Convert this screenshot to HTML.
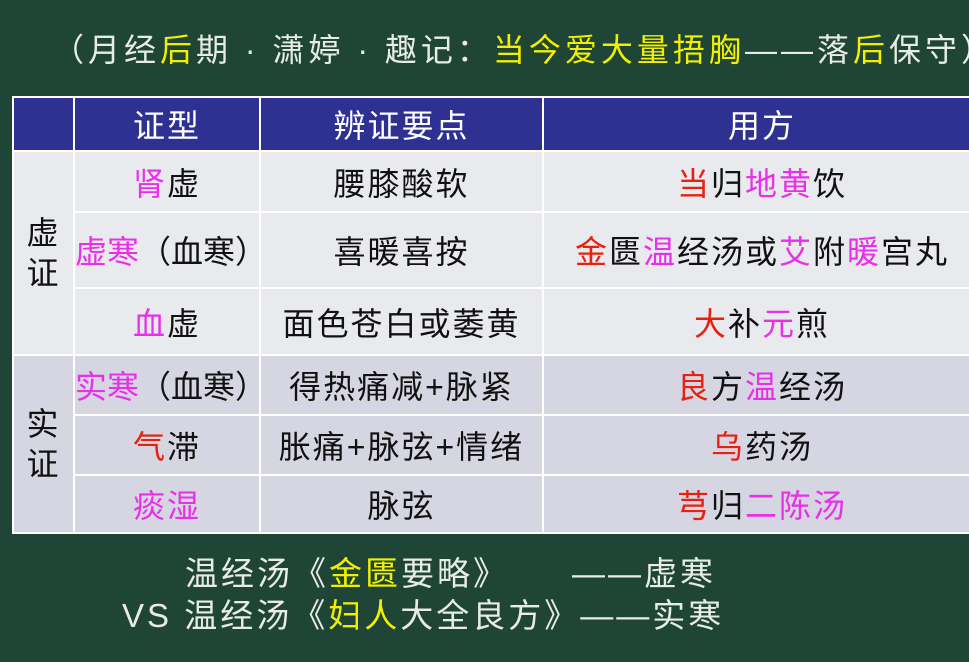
<!DOCTYPE html>
<html><head><meta charset="utf-8"><style>
*{margin:0;padding:0;box-sizing:border-box}
body{width:969px;height:662px;background:#1f4536;font-family:"Liberation Sans","Noto Sans CJK SC",sans-serif;position:relative;overflow:hidden}
.t{position:absolute;white-space:nowrap;line-height:1}
.y{color:#f0f000}.w{color:#e8ece8}
.m{color:#e830e8}.r{color:#e82010}
table{position:absolute;left:12px;top:96px;border-collapse:collapse;width:970px;table-layout:fixed}
td{border:2px solid #fff;text-align:center;font-size:32px;letter-spacing:2px;color:#111;padding:0;white-space:nowrap;overflow:hidden}
tr.h td{background:#2e3192;color:#fff;height:54px}
tr.a td{background:#e9eaee}
tr.b td{background:#d5d6e2}
.n{letter-spacing:0}
</style></head><body>
<div class="t w" style="left:52px;top:34px;font-size:32px;letter-spacing:4px">（月经<span class="y">后</span>期 · 潇婷 · 趣记：<span class="y">当今爱大量捂胸</span>——落<span class="y">后</span>保守）</div>
<table>
<colgroup><col style="width:61px"><col style="width:186px"><col style="width:283px"><col></colgroup>
<tr class="h"><td></td><td>证型</td><td>辨证要点</td><td>用方</td></tr>
<tr class="a" style="height:61px"><td rowspan="3" style="line-height:1.25">虚<br>证</td><td><span class="m">肾</span>虚</td><td>腰膝酸软</td><td><span class="r">当</span>归<span class="m">地黄</span>饮</td></tr>
<tr class="a" style="height:76px"><td class="n"><span class="m">虚寒</span>（血寒）</td><td>喜暖喜按</td><td><span class="r">金</span>匮<span class="m">温</span>经汤或<span class="m">艾</span>附<span class="m">暖</span>宫丸</td></tr>
<tr class="a" style="height:67px"><td><span class="m">血</span>虚</td><td>面色苍白或萎黄</td><td><span class="r">大</span>补<span class="m">元</span>煎</td></tr>
<tr class="b" style="height:60px"><td rowspan="3" style="line-height:1.25">实<br>证</td><td class="n"><span class="m">实寒</span>（血寒）</td><td>得热痛减+脉紧</td><td><span class="r">良</span>方<span class="m">温</span>经汤</td></tr>
<tr class="b" style="height:60px"><td><span class="r">气</span>滞</td><td>胀痛+脉弦+情绪</td><td><span class="r">乌</span>药汤</td></tr>
<tr class="b" style="height:58px"><td><span class="m">痰湿</span></td><td>脉弦</td><td><span class="r">芎</span>归<span class="m">二陈汤</span></td></tr>
</table>
<div class="t w" style="left:185px;top:557px;font-size:33px;letter-spacing:3px">温经汤《<span class="y">金匮</span>要略》</div>
<div class="t w" style="left:572px;top:557px;font-size:33px;letter-spacing:3px">——虚寒</div>
<div class="t w" style="left:122px;top:599px;font-size:33px;letter-spacing:3px">VS 温经汤《<span class="y">妇人</span>大全良方》——实寒</div>
</body></html>
